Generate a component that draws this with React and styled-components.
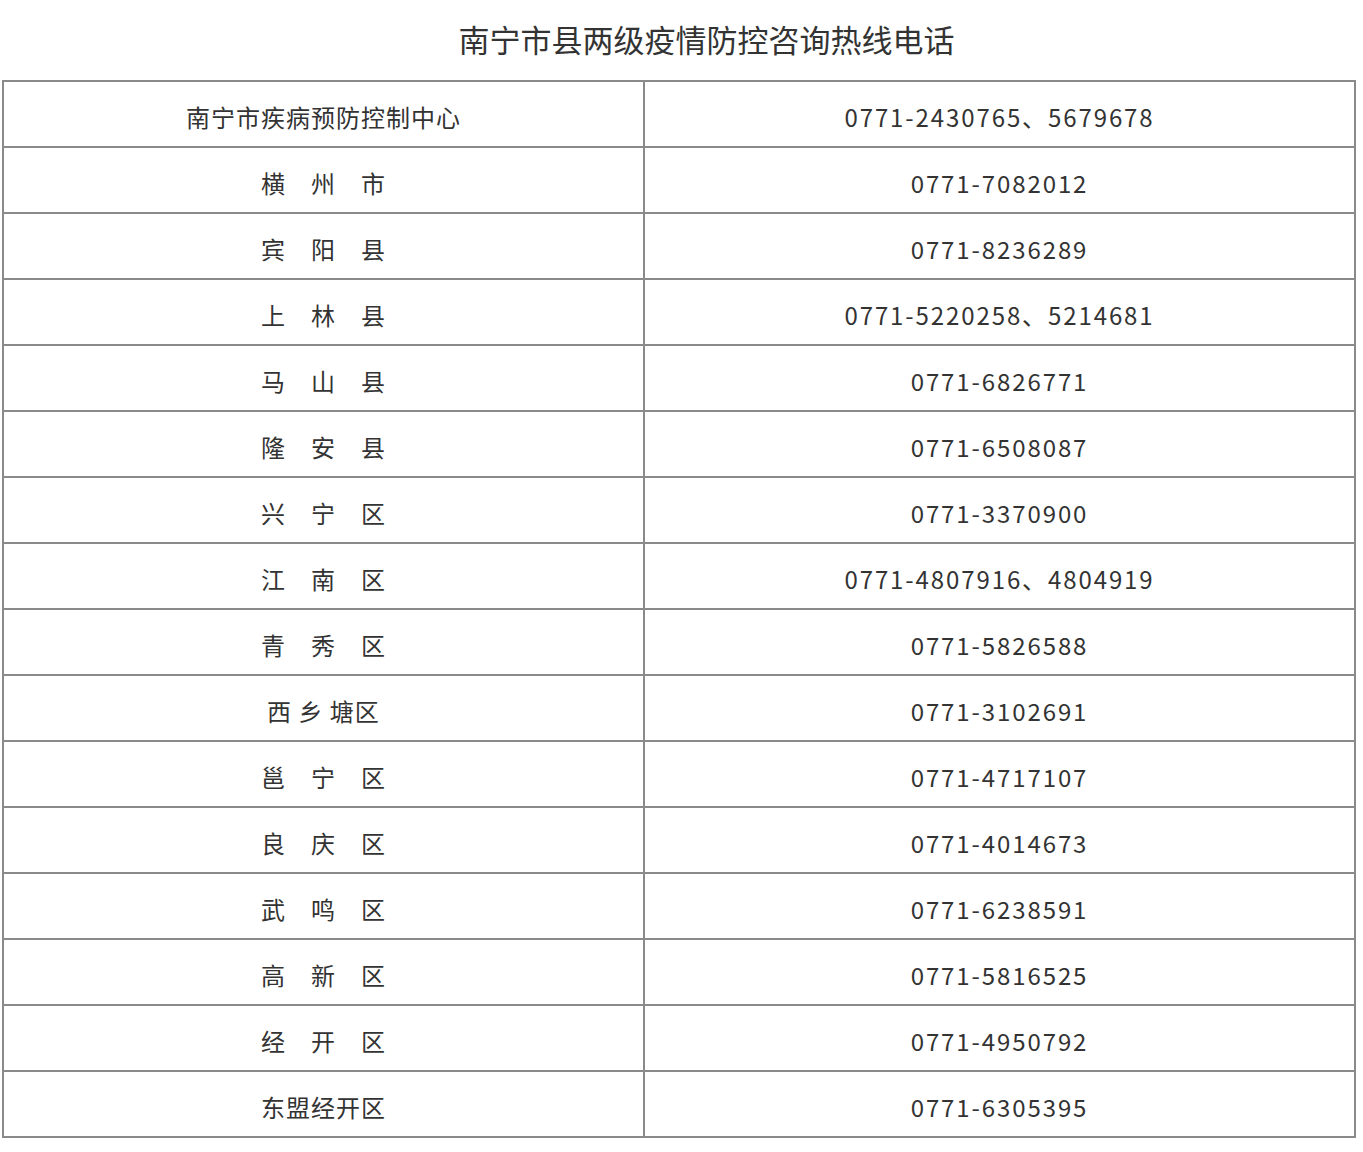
import React from "react";
import styled, { createGlobalStyle } from "styled-components";

const GlobalStyle = createGlobalStyle`
  html, body {
    margin: 0;
    padding: 0;
    background: #ffffff;
  }
  body {
    font-family: "Noto Sans CJK SC", "Noto Sans", sans-serif;
    color: #333333;
  }
`;

const Page = styled.div`
  width: 1363px;
  padding: 0 0 0 2px;
  box-sizing: border-box;
`;

const Title = styled.h1`
  margin: 0;
  height: 80px;
  display: flex;
  align-items: center;
  justify-content: center;
  padding-left: 48px;
  padding-bottom: 4px;
  box-sizing: border-box;
  font-size: 31px;
  font-weight: 400;
  color: #333333;
`;

const Table = styled.table`
  width: 1354px;
  border-collapse: collapse;
  table-layout: fixed;
  border: 2px solid #8a8a8a;
`;

const Cell = styled.td`
  border: 2px solid #8a8a8a;
  height: 66px;
  padding: 5px 0 0 0;
  box-sizing: border-box;
  text-align: center;
  vertical-align: middle;
  font-size: 24px;
  letter-spacing: ${(p) => (p.$phone ? "1.9px" : "1px")};
  color: #333333;
  white-space: pre;
  width: ${(p) => (p.$phone ? "711px" : "641px")};
`;

const rows = [
  ["南宁市疾病预防控制中心", "0771-2430765、5679678"],
  ["横　州　市", "0771-7082012"],
  ["宾　阳　县", "0771-8236289"],
  ["上　林　县", "0771-5220258、5214681"],
  ["马　山　县", "0771-6826771"],
  ["隆　安　县", "0771-6508087"],
  ["兴　宁　区", "0771-3370900"],
  ["江　南　区", "0771-4807916、4804919"],
  ["青　秀　区", "0771-5826588"],
  ["西 乡 塘区", "0771-3102691"],
  ["邕　宁　区", "0771-4717107"],
  ["良　庆　区", "0771-4014673"],
  ["武　鸣　区", "0771-6238591"],
  ["高　新　区", "0771-5816525"],
  ["经　开　区", "0771-4950792"],
  ["东盟经开区", "0771-6305395"],
];

export default function App() {
  return (
    <Page>
      <GlobalStyle />
      <Title>南宁市县两级疫情防控咨询热线电话</Title>
      <Table>
        <tbody>
          {rows.map(([name, phone]) => (
            <tr key={name}>
              <Cell>{name}</Cell>
              <Cell $phone>{phone}</Cell>
            </tr>
          ))}
        </tbody>
      </Table>
    </Page>
  );
}
